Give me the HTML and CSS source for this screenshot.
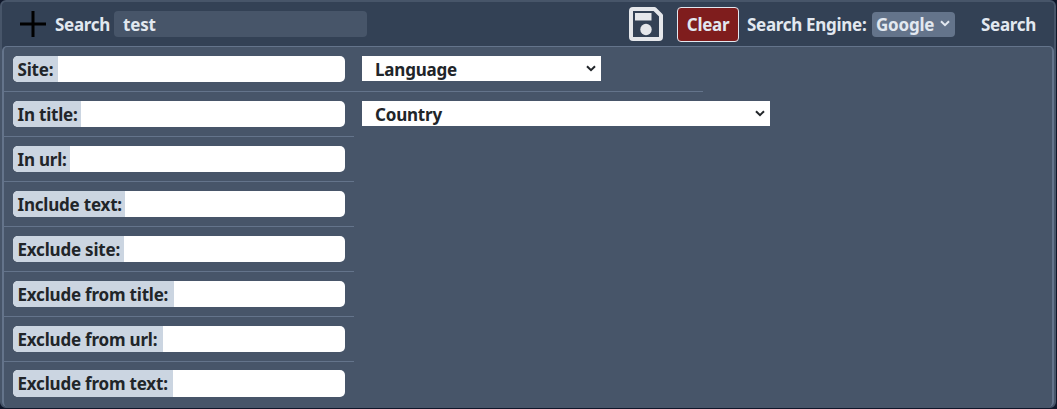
FILE: index.html
```html
<!DOCTYPE html>
<html lang="en">
<head>
<meta charset="utf-8">
<title>Search</title>
<link rel="stylesheet" href="styles.css">
</head>
<body>
<main class="shell">
  <header class="bar">
    <svg class="plus" viewBox="0 0 26 26"><path d="M13 0v26M0 13h26" stroke="#000" stroke-width="3"/></svg>
    <span class="bar-label t-search">Search</span>
    <div class="query">test</div>
    <svg class="save" viewBox="0 0 34 34" fill="none"><path d="M4 2H25.500L32 8.500V30Q32 32 30 32H4Q2 32 2 30V4Q2 2 4 2Z" stroke="#e5e7eb" stroke-width="4" stroke-linejoin="round"/><path d="M6 6h16.500v7.500H6z" fill="#e5e7eb"/><circle cx="17" cy="22.500" r="5.700" fill="#e5e7eb"/></svg>
    <button class="clear">Clear</button>
    <span class="bar-label engine-label">Search Engine:</span>
    <div class="engine"><span>Google</span><svg class="chev" viewBox="0 0 10 7"><path d="M1 1.200l4 4 4-4"/></svg></div>
    <span class="bar-label submit">Search</span>
  </header>
  <section class="panel">
    <div class="row row-wide">
      <div class="field"><label class="w-site">Site:</label></div>
      <div class="select language"><span>Language</span><svg class="chev" viewBox="0 0 10 7"><path d="M1 1.200l4 4 4-4"/></svg></div>
    </div>
    <div class="row">
      <div class="field"><label class="w-title">In title:</label></div>
      <div class="select country"><span>Country</span><svg class="chev" viewBox="0 0 10 7"><path d="M1 1.200l4 4 4-4"/></svg></div>
    </div>
    <div class="row"><div class="field"><label class="w-url">In url:</label></div></div>
    <div class="row"><div class="field"><label class="w-text">Include text:</label></div></div>
    <div class="row"><div class="field"><label class="w-xsite">Exclude site:</label></div></div>
    <div class="row"><div class="field"><label class="w-xtitle">Exclude from title:</label></div></div>
    <div class="row"><div class="field"><label class="w-xurl">Exclude from url:</label></div></div>
    <div class="row row-last"><div class="field"><label class="w-xtext">Exclude from text:</label></div></div>
  </section>
</main>
</body>
</html>
```
FILE: styles.css
```css
* { box-sizing: border-box; }
body {
  margin: 0;
  height: 409px;
  overflow: hidden;
  background: #0f172a;
  color: #212529;
  font: 700 17px/24px "Segoe UI", "Noto Sans", sans-serif;
  letter-spacing: -0.200px;
  white-space: nowrap;
}
.shell {
  width: 1056px;
  height: 408px;
  border: 2px solid #475569;
  border-bottom-width: 1px;
  border-radius: 6px;
  background: #334155;
}
.bar { display: flex; align-items: center; height: 44px; padding-left: 18px; color: #e2e8f0; }
.bar svg, .bar > * { flex: none; }
.plus { width: 26px; height: 26px; }
.t-search { width: 59px; padding-left: 9px; }
.t-search, .engine-label, .submit { margin-top: 1px; }
.bar-label { letter-spacing: -0.300px; }
.query { width: 253px; height: 26px; margin-left: 9px; padding: 2px 0 0 9px; border-radius: 4px; background: #475569; }
.save { width: 34px; height: 34px; margin-left: 262px; }
.clear {
  width: 62px;
  height: 35px;
  margin-left: 14px;
  padding: 1px 0 0;
  border: 1px solid #e2e8f0;
  border-radius: 4px;
  background: #7f1d1d;
  color: #e2e8f0;
  font: inherit;
  letter-spacing: -0.300px;
}
.engine-label { width: 133px; padding-left: 8px; }
.engine {
  display: flex;
  align-items: center;
  width: 83px;
  height: 25px;
  padding: 1px 5px 0 4px;
  justify-content: space-between;
  border-radius: 4px;
  background: #64748b;
}
.chev { width: 10px; height: 7px; margin-top: -2px; fill: none; stroke: currentColor; stroke-width: 2; }
.submit { margin-left: 26px; }
.panel {
  width: 1052px;
  height: 361px;
  border: 2px solid #64748b;
  border-top-width: 1px;
  border-bottom: 0;
  border-radius: 5px;
  background: #475569;
}
.row {
  display: flex;
  width: 350px;
  height: 45px;
  padding: 9px 0 0 9px;
  border-bottom: 1px solid #64748b;
}
.row-wide { width: 699px; }
.row-last { padding-top: 8px; border: 0; }
.field { flex: none; display: flex; width: 332px; height: 26px; overflow: hidden; border-radius: 5px; background: #fff; }
.row-last .field { height: 27px; }
.field label { height: 100%; padding: 2px 0 0 4.500px; background: #cbd5e1; }
.select { flex: none; display: flex; justify-content: space-between; align-items: center; height: 25px; margin-left: 17px; padding: 2px 5px 0 13px; background: #fff; }
.language { width: 239px; }
.country { width: 408px; }
.w-site { width: 45px; }
.w-title { width: 68px; }
.w-url { width: 57px; }
.w-text { width: 112px; }
.w-xsite { width: 111px; }
.w-xtitle { width: 161px; }
.w-xurl { width: 150px; }
.w-xtext { width: 160px; }
```
